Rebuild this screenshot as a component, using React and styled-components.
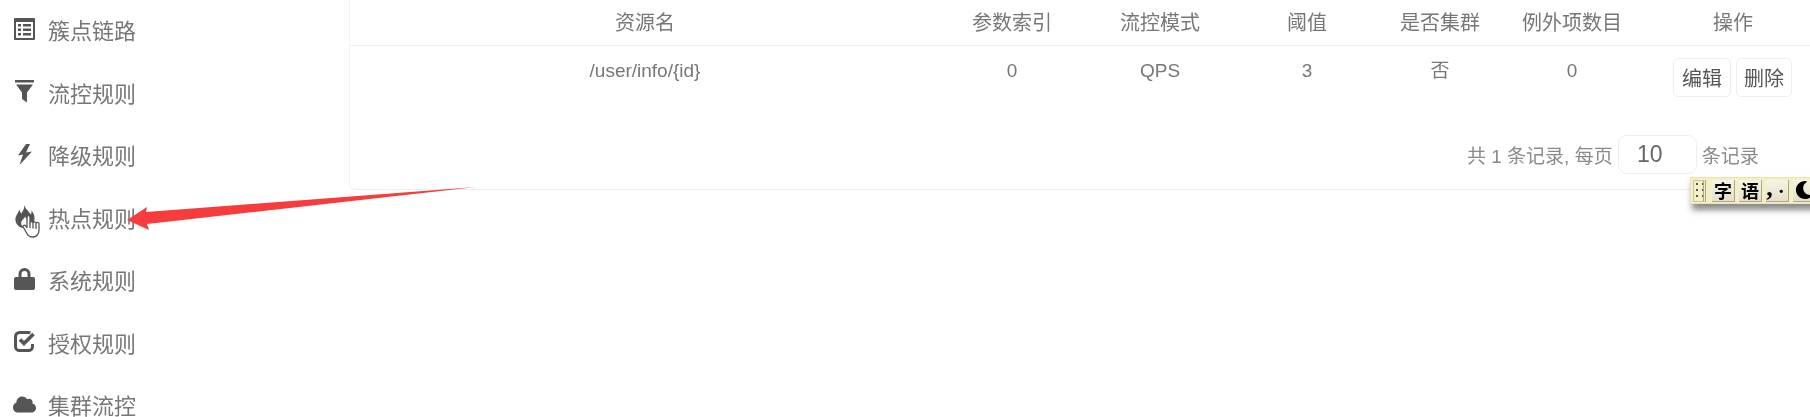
import React from "react";
import styled, { createGlobalStyle } from "styled-components";
import { FaCloud, FaMoon } from "react-icons/fa";

const GlobalStyle = createGlobalStyle`
  html, body {
    margin: 0;
    height: 100%;
    overflow: hidden;
    background: #fff;
    font-family: "Liberation Sans", "Noto Sans CJK SC", sans-serif;
  }
`;

const Page = styled.div`
  position: relative;
  display: flex;
  width: 1810px;
  height: 417px;
  overflow: hidden;
  filter: blur(0.35px);
`;

const Sidebar = styled.nav`
  width: 349px;
  flex-shrink: 0;
  margin-top: -2px;
`;

const NavItem = styled.div`
  display: flex;
  align-items: center;
  height: 62.5px;
  padding-left: 13px;
  color: #777;
  font-size: 22px;
`;

const NavIcon = styled.span`
  display: flex;
  justify-content: center;
  width: 23px;
  margin-right: 12px;
  color: #555;
  font-size: 23px;
`;

const Panel = styled.main`
  flex: 1;
  height: 189px;
  box-sizing: content-box;
  border-left: 1px solid #f3f3f3;
  border-bottom: 1px solid #eeeeee;
  border-bottom-left-radius: 6px;
`;

const Row = styled.div`
  display: grid;
  grid-template-columns: 590px 144px 152px 142px 124px 140px 1fr;
  justify-items: center;
`;

const HeadRow = styled(Row)`
  align-items: center;
  height: 45px;
  border-bottom: 1px solid #eeeeee;
  color: #777;
  font-size: 20px;
`;

const BodyRow = styled(Row)`
  height: 89px;
  padding-top: 12px;
  box-sizing: border-box;
  color: #777;
  font-size: 19px;
`;

const Cell = styled.div`
  line-height: 26px;
  margin-left: ${(props) => props.$shift || 0}px;
`;

const Actions = styled.div`
  display: flex;
  gap: 5px;
  margin-left: 13px;
`;

const ActionButton = styled.button`
  height: 39px;
  width: ${(props) => props.$width}px;
  padding: 0;
  background: #fff;
  border: 1px solid #eeeeee;
  border-radius: 5px;
  color: #555;
  font: inherit;
  font-size: 20px;
`;

const Pagination = styled.div`
  display: flex;
  align-items: center;
  height: 39px;
  padding-left: 1117px;
  color: #8a8a8a;
  font-size: 19px;
`;

const PageSize = styled.div`
  display: flex;
  align-items: center;
  justify-content: center;
  box-sizing: border-box;
  width: 79px;
  height: 39px;
  margin: 0 5px;
  padding-right: 15px;
  border: 1px solid #eeeeee;
  border-radius: 9px;
  color: #666;
  font-size: 23px;
`;

const Arrow = styled.svg`
  position: absolute;
  left: 0;
  top: 0;
  pointer-events: none;
`;

const Cursor = styled.svg`
  position: absolute;
  left: 22px;
  top: 214px;
`;

const ImeBar = styled.div`
  position: absolute;
  left: 1690px;
  top: 177px;
  display: flex;
  align-items: center;
  gap: 4px;
  width: 130px;
  height: 27px;
  box-sizing: border-box;
  padding-left: 2px;
  background: #f4efc4;
  border: 1px solid #e9e3b4;
  box-shadow: 2px 6px 6px rgba(90, 90, 90, 0.7);
`;

const ImeGrip = styled.div`
  width: 13px;
  height: 22px;
  margin-right: 2px;
  border: 1px solid #c9c59c;
  border-right: 3px double #a9a58c;
  box-sizing: border-box;
  background-image: radial-gradient(circle, #555 1px, transparent 1.2px);
  background-size: 6px 6px;
`;

const ImeKey = styled.div`
  display: flex;
  align-items: center;
  justify-content: center;
  width: 22px;
  height: 21px;
  flex-shrink: 0;
  background: linear-gradient(#f7f4e2, #e2dfcb);
  border-right: 1px solid #a8a690;
  border-bottom: 1px solid #a8a690;
  color: #000;
  font-family: "Noto Sans CJK SC", sans-serif;
  font-size: 18px;
  font-weight: 700;
`;

const ImeComma = styled.span`
  font-family: "Liberation Serif", serif;
  font-size: 26px;
  line-height: 21px;
  margin-top: -6px;
`;

const ImeDot = styled.span`
  font-size: 13px;
  margin-left: 2px;
`;

const ListIcon = () => (
  <svg width="21" height="22" viewBox="0 0 21 22" fill="currentColor">
    <path
      fillRule="evenodd"
      d="M1 0h19a1 1 0 0 1 1 1v20a1 1 0 0 1-1 1H1a1 1 0 0 1-1-1V1a1 1 0 0 1 1-1zm1 4v16h17V4z"
    />
    <path d="M4 6h3v2.5H4zM9 6h8v2.5H9zM4 10.5h3V13H4zM9 10.5h8V13H9zM4 15h3v2.5H4zM9 15h8v2.5H9z" />
  </svg>
);

const FunnelIcon = () => (
  <svg width="20" height="23" viewBox="0 0 20 23" fill="currentColor">
    <path d="M0 0h19v2.5H0zM1 4.5h17l-6 8v10l-5-3.5v-6.500z" />
  </svg>
);

const BoltIcon = () => (
  <svg width="15" height="21" viewBox="0 0 15 21" fill="currentColor">
    <path d="M9 0 1 11.500l5-1L2.500 21 15 7.500l-6 1L13 0z" />
  </svg>
);

const FlameIcon = () => (
  <svg width="20" height="23" viewBox="0 0 20 24" fill="currentColor">
    <path
      fillRule="evenodd"
      d="M9 0c1 4 5 6 7 10 1-2 1-3 .5-4.500C19 8 20 11 20 14c0 6-5 10-10 10C4 24 0 20 0 15c0-4 3-6 4-10 1 2 1.500 3 2 4 2-3 3.500-5 3-9zM10 12c1 3 4 4 4 7 0 2.500-2 4-4 4-2.500 0-4-2-4-4 0-3 3-4 4-7z"
    />
  </svg>
);

const LockIcon = () => (
  <svg width="21" height="22" viewBox="0 0 21 22" fill="currentColor">
    <path
      fillRule="evenodd"
      d="M4.500 9V6a6 6 0 0 1 12 0v3h2.500A2 2 0 0 1 21 11v9a2 2 0 0 1-2 2H2a2 2 0 0 1-2-2v-9a2 2 0 0 1 2-2zM7.500 9h6V6a3 3 0 0 0-6 0z"
    />
  </svg>
);

const CheckIcon = () => (
  <svg width="22" height="21" viewBox="0 0 22 21" fill="none" stroke="currentColor">
    <path
      strokeWidth="3"
      d="M18.500 13v2.500a4 4 0 0 1-4 4H5.500a4 4 0 0 1-4-4v-10a4 4 0 0 1 4-4h9c.7 0 1.300.1 1.900.4"
    />
    <path strokeWidth="3.600" d="M6 8.500l4 4 9.500-9.500" />
  </svg>
);

const navItems = [
  ["簇点链路", <ListIcon />],
  ["流控规则", <FunnelIcon />],
  ["降级规则", <BoltIcon />],
  ["热点规则", <FlameIcon />],
  ["系统规则", <LockIcon />],
  ["授权规则", <CheckIcon />],
  ["集群流控", <FaCloud />],
];

const columns = ["资源名", "参数索引", "流控模式", "阈值", "是否集群", "例外项数目", "操作"];
const values = ["/user/info/{id}", "0", "QPS", "3", "否", "0"];

export default function App() {
  return (
    <Page>
      <GlobalStyle />
      <Sidebar>
        {navItems.map(([label, icon]) => (
          <NavItem key={label}>
            <NavIcon>{icon}</NavIcon>
            {label}
          </NavItem>
        ))}
      </Sidebar>
      <Panel>
        <HeadRow>
          {columns.map((name, i) => (
            <Cell key={name} $shift={i === 6 ? 14 : 0}>
              {name}
            </Cell>
          ))}
        </HeadRow>
        <BodyRow>
          {values.map((value, i) => (
            <Cell key={i}>{value}</Cell>
          ))}
          <Actions>
            <ActionButton $width={58}>编辑</ActionButton>
            <ActionButton $width={56}>删除</ActionButton>
          </Actions>
        </BodyRow>
        <Pagination>
          共 1 条记录, 每页
          <PageSize>10</PageSize>
          条记录
        </Pagination>
      </Panel>
      <Arrow width="1810" height="417">
        <polygon points="127,220 147,207 146,212 476,187 147,224 149,230" fill="#f63c3c" />
      </Arrow>
      <Cursor width="19" height="24" viewBox="0 0 19 24">
        <path
          fill="#fff"
          stroke="#555"
          strokeWidth="1.300"
          strokeLinejoin="round"
          d="M5 3a1.500 1.500 0 0 1 3 0v6a1.500 1.500 0 0 1 3 .3 1.500 1.500 0 0 1 3 .3 1.500 1.500 0 0 1 3 .6V16c0 4-2.500 7-6 7h-1c-3 0-4.500-2-6-5L1.200 13c-.8-1.600 1.300-2.600 2.400-1.200L5 13.500z"
        />
        <path stroke="#555" strokeWidth="1.300" d="M8 9v5M11 9.500v5M14 10v5" />
      </Cursor>
      <ImeBar>
        <ImeGrip />
        <ImeKey>字</ImeKey>
        <ImeKey>语</ImeKey>
        <ImeKey>
          <ImeComma>,</ImeComma>
          <ImeDot>•</ImeDot>
        </ImeKey>
        <ImeKey>
          <FaMoon />
        </ImeKey>
      </ImeBar>
    </Page>
  );
}
